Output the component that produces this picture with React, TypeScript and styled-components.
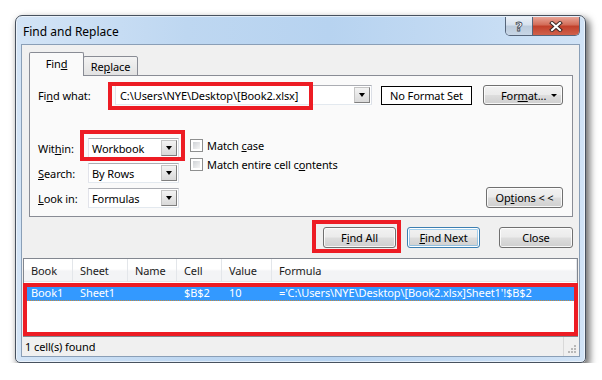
import React from "react";
import styled, { createGlobalStyle } from "styled-components";

const UI_FONT = `"Noto Sans", "Open Sans", "Liberation Sans", Arial, sans-serif`;

const GlobalStyle = createGlobalStyle`
  html, body { margin: 0; padding: 0; background: #ffffff; }
  body { font-family: ${UI_FONT}; font-size: 11px; letter-spacing: -0.1px; color: #000; }
  * { box-sizing: border-box; }
`;

const Page = styled.div`
  padding: 15px 0 0 15px;
`;

const Window = styled.div`
  width: 571px;
  height: 348px;
  display: flex;
  flex-direction: column;
  border: 1px solid #47515e;
  border-radius: 7px 7px 5px 5px;
  background: linear-gradient(to right, #d3e4f6 0%, #bed7f1 30%, #b7d3f0 55%, #c4dbf3 80%, #d1e3f6 100%);
  box-shadow: inset 0 0 0 1px rgba(255, 255, 255, 0.55), 3px 4px 7px 1px rgba(0, 0, 0, 0.55);
`;

const TitleBar = styled.div`
  height: 28px;
  display: flex;
  align-items: flex-start;
  padding: 0 5px 0 7px;
`;

const Title = styled.div`
  font-size: 12px;
  letter-spacing: 0;
  line-height: 31px;
  color: #000;
`;

const CaptionGroup = styled.div`
  margin-left: auto;
  margin-top: 1px;
  height: 19px;
  display: flex;
  border: 1px solid #56657a;
  border-top: none;
  border-radius: 0 0 5px 5px;
  overflow: hidden;
`;

const CaptionButton = styled.div<{ $variant: "help" | "close" }>`
  width: ${(p) => (p.$variant === "help" ? 27 : 46)}px;
  display: flex;
  align-items: center;
  justify-content: center;
  border-right: ${(p) => (p.$variant === "help" ? "1px solid #56657a" : "none")};
  background: ${(p) =>
    p.$variant === "help"
      ? "linear-gradient(#eaf0f7 0%, #d6e1ee 45%, #bccbdc 50%, #c8d6e6 100%)"
      : "linear-gradient(#e8a496 0%, #d26a56 45%, #c13f2a 50%, #d0614b 100%)"};
`;

const HelpGlyph = styled.span`
  font-family: "DejaVu Sans", sans-serif;
  font-weight: bold;
  font-size: 13px;
  line-height: 1;
  color: #ffffff;
  -webkit-text-stroke: 0.8px #3b4552;
`;

const Client = styled.div`
  flex: 1;
  margin: 0 5px 5px;
  border: 1px solid #8a9fb7;
  background: #f0f0f0;
  display: flex;
  flex-direction: column;
`;

const TabArea = styled.div`
  padding: 7px 6px 0 7px;
`;

const TabStrip = styled.div`
  height: 24px;
  margin-bottom: -1px;
  display: flex;
  align-items: flex-end;
  position: relative;
  z-index: 1;
`;

const Tab = styled.div<{ $active?: boolean }>`
  width: 55px;
  height: ${(p) => (p.$active ? 24 : 20)}px;
  margin-left: ${(p) => (p.$active ? 0 : -1)}px;
  display: flex;
  align-items: center;
  justify-content: center;
  padding-bottom: ${(p) => (p.$active ? 2 : 0)}px;
  border: 1px solid #898c95;
  border-bottom: ${(p) => (p.$active ? "none" : "1px solid #898c95")};
  border-radius: 2px 2px 0 0;
  background: ${(p) => (p.$active ? "#fafafa" : "linear-gradient(#f3f3f3, #e2e2e2)")};
`;

const Panel = styled.div`
  height: 142px;
  border: 1px solid #898c95;
  background: #fafafa;
  padding: 9px 9px 8px 8px;
  display: flex;
  flex-direction: column;
`;

const FindRow = styled.div`
  height: 20px;
  display: flex;
  align-items: center;
`;

const Label = styled.span<{ $w: number }>`
  width: ${(p) => p.$w}px;
  white-space: nowrap;
`;

const U = styled.span`
  text-decoration: underline;
`;

const Combo = styled.div<{ $w: number }>`
  position: relative;
  width: ${(p) => p.$w}px;
  height: 20px;
  display: flex;
  align-items: stretch;
  background: #ffffff;
  border: 1px solid #abadb3;
  border-color: #abadb3 #dbdfe6 #e3e9ef #e2e3ea;
`;

const ComboText = styled.span<{ $pad: number }>`
  flex: 1;
  padding-left: ${(p) => p.$pad}px;
  display: flex;
  align-items: center;
  white-space: nowrap;
  overflow: hidden;
`;

const DropButton = styled.span`
  width: 16px;
  margin: 1px;
  display: flex;
  align-items: center;
  justify-content: center;
  border: 1px solid #a9a9a9;
  border-color: #c4c4c4 #7f7f7f #7f7f7f #c4c4c4;
  background: linear-gradient(#f3f3f3, #d9d9d9);
`;

const Arrow = styled.span`
  width: 0;
  height: 0;
  border-left: 3.5px solid transparent;
  border-right: 3.5px solid transparent;
  border-top: 4px solid #000;
`;

const NoFormat = styled.div`
  margin-left: 9px;
  width: 91px;
  height: 19px;
  border: 1px solid #000;
  background: #ffffff;
  display: flex;
  align-items: center;
  justify-content: center;
  white-space: nowrap;
`;

const Button = styled.div<{ $w: number; $default?: boolean; $ml?: number; $h?: number }>`
  position: relative;
  width: ${(p) => p.$w}px;
  height: ${(p) => p.$h ?? 21}px;
  margin-left: ${(p) => p.$ml ?? 0}px;
  display: flex;
  align-items: center;
  justify-content: center;
  white-space: nowrap;
  border: 1px solid ${(p) => (p.$default ? "#3c7fb1" : "#707070")};
  border-radius: 3px;
  background: linear-gradient(#f2f2f2 0%, #ebebeb 48%, #dddddd 52%, #cfcfcf 100%);
  box-shadow: ${(p) =>
    p.$default
      ? "inset 0 0 0 1px #ffffff, inset 0 0 0 2px rgba(72, 168, 234, 0.45)"
      : "inset 0 0 0 1px rgba(255, 255, 255, 0.8)"};
`;

const FormatLabel = styled.span`
  margin-left: 17px;
`;

const SmallArrow = styled.span`
  margin-left: auto;
  margin-right: 5px;
  width: 0;
  height: 0;
  border-left: 3px solid transparent;
  border-right: 3px solid transparent;
  border-top: 3px solid #000;
`;

const OptionsArea = styled.div`
  margin-top: 33px;
  display: flex;
  align-items: flex-start;
  flex: 1;
`;

const FieldGrid = styled.div`
  display: grid;
  grid-template-columns: 50px 91px;
  grid-auto-rows: 20px;
  row-gap: 5px;
  align-items: center;
`;

const CheckColumn = styled.div`
  margin-left: 11px;
  margin-top: 1px;
  display: flex;
  flex-direction: column;
  gap: 6px;
`;

const CheckRow = styled.label`
  height: 13px;
  display: flex;
  align-items: center;
  gap: 4px;
  white-space: nowrap;
`;

const CheckBox = styled.span`
  width: 13px;
  height: 13px;
  flex: none;
  border: 1px solid #8e8f8f;
  padding: 2px;
  background: linear-gradient(135deg, #cfd2d6, #f6f6f6) content-box, #ffffff;
`;

const OptionsButton = styled(Button)`
  margin-left: auto;
  align-self: flex-end;
`;

const ButtonRow = styled.div`
  display: flex;
  justify-content: flex-end;
  padding: 10px 6px 0 0;
`;

const Results = styled.div`
  position: relative;
  flex: 1;
  margin: 10px 1px 0;
  border: 1px solid #828790;
  background: #ffffff;
  display: flex;
  flex-direction: column;
`;

const GridRow = styled.div<{ $header?: boolean; $selected?: boolean }>`
  display: grid;
  grid-template-columns: 49px 55px 49px 45px 50px 1fr;
  height: ${(p) => (p.$header ? 23 : 16)}px;
  margin-top: ${(p) => (p.$header ? 0 : 3)}px;
  color: ${(p) => (p.$selected ? "#ffffff" : "#1b1b1b")};
  background: ${(p) =>
    p.$header
      ? "linear-gradient(#ffffff 0%, #ffffff 45%, #f3f4f6 55%, #f3f4f6 100%)"
      : p.$selected
      ? "#3399ff"
      : "transparent"};
  border-bottom: ${(p) =>
    p.$header ? "1px solid #e3e6ea" : p.$selected ? "1px dotted #c98a3a" : "none"};
`;

const Cell = styled.div<{ $header?: boolean }>`
  display: flex;
  align-items: center;
  padding-left: 7px;
  white-space: nowrap;
  border-right: ${(p) => (p.$header ? "1px solid #e3e6ea" : "none")};
`;

const StatusBar = styled.div`
  height: 19px;
  display: flex;
  align-items: center;
  padding-left: 3px;
`;

const GripCell = styled.div`
  margin-left: auto;
  align-self: stretch;
  width: 16px;
  border-left: 1px solid #d9d9d9;
  display: flex;
  align-items: flex-end;
  justify-content: flex-end;
  padding: 0 2px 2px 0;
`;

const Mark = styled.div<{ $top: number; $left: number; $w: number; $h: number }>`
  position: absolute;
  top: ${(p) => p.$top}px;
  left: ${(p) => p.$left}px;
  width: ${(p) => p.$w}px;
  height: ${(p) => p.$h}px;
  border: 4px solid #ed1c24;
  pointer-events: none;
  z-index: 5;
`;

const CloseGlyph = () => (
  <svg width="14" height="11" viewBox="0 0 14 11">
    <path d="M3 2 L11 9 M11 2 L3 9" stroke="#3d2a26" strokeWidth="4" strokeLinecap="square" fill="none" />
    <path d="M3 2 L11 9 M11 2 L3 9" stroke="#ffffff" strokeWidth="2" strokeLinecap="square" fill="none" />
  </svg>
);

const Grip = () => (
  <svg width="10" height="10" viewBox="0 0 10 10">
    {[
      [7, 1],
      [7, 4],
      [4, 4],
      [7, 7],
      [4, 7],
      [1, 7],
    ].map(([x, y]) => (
      <rect key={`${x}-${y}`} x={x} y={y} width="2" height="2" fill="#b8b8b8" />
    ))}
  </svg>
);

const columns = ["Book", "Sheet", "Name", "Cell", "Value", "Formula"];
const found = ["Book1", "Sheet1", "", "$B$2", "10", "='C:\\Users\\NYE\\Desktop\\[Book2.xlsx]Sheet1'!$B$2"];

const SelectField = ({ value, children }: { value: string; children?: React.ReactNode }) => (
  <Combo $w={91}>
    <ComboText $pad={3}>{value}</ComboText>
    <DropButton>
      <Arrow />
    </DropButton>
    {children}
  </Combo>
);

export default function App() {
  return (
    <>
      <GlobalStyle />
      <Page>
        <Window>
          <TitleBar>
            <Title>Find and Replace</Title>
            <CaptionGroup>
              <CaptionButton $variant="help">
                <HelpGlyph>?</HelpGlyph>
              </CaptionButton>
              <CaptionButton $variant="close">
                <CloseGlyph />
              </CaptionButton>
            </CaptionGroup>
          </TitleBar>

          <Client>
            <TabArea>
              <TabStrip>
                <Tab $active>
                  <span>
                    Fin<U>d</U>
                  </span>
                </Tab>
                <Tab>
                  <span>
                    Re<U>p</U>lace
                  </span>
                </Tab>
              </TabStrip>

              <Panel>
                <FindRow>
                  <Label $w={77}>
                    Fi<U>n</U>d what:
                  </Label>
                  <Combo $w={257}>
                    <ComboText $pad={4}>C:\Users\NYE\Desktop\[Book2.xlsx]</ComboText>
                    <DropButton>
                      <Arrow />
                    </DropButton>
                    <Mark $top={-4} $left={-8} $w={205} $h={28} />
                  </Combo>
                  <NoFormat>No Format Set</NoFormat>
                  <Button $w={80} $h={20} $ml={11}>
                    <FormatLabel>
                      For<U>m</U>at...
                    </FormatLabel>
                    <SmallArrow />
                  </Button>
                </FindRow>

                <OptionsArea>
                  <FieldGrid>
                    <Label $w={50}>
                      Wit<U>h</U>in:
                    </Label>
                    <SelectField value="Workbook">
                      <Mark $top={-9} $left={-9} $w={105} $h={31} />
                    </SelectField>
                    <Label $w={50}>
                      <U>S</U>earch:
                    </Label>
                    <SelectField value="By Rows" />
                    <Label $w={50}>
                      <U>L</U>ook in:
                    </Label>
                    <SelectField value="Formulas" />
                  </FieldGrid>

                  <CheckColumn>
                    <CheckRow>
                      <CheckBox />
                      <span>
                        Match <U>c</U>ase
                      </span>
                    </CheckRow>
                    <CheckRow>
                      <CheckBox />
                      <span>
                        Match entire cell c<U>o</U>ntents
                      </span>
                    </CheckRow>
                  </CheckColumn>

                  <OptionsButton $w={77}>
                    <span>
                      Op<U>t</U>ions &lt; &lt;
                    </span>
                  </OptionsButton>
                </OptionsArea>
              </Panel>
            </TabArea>

            <ButtonRow>
              <Button $w={73}>
                <span>
                  F<U>i</U>nd All
                </span>
                <Mark $top={-8} $left={-12} $w={89} $h={33} />
              </Button>
              <Button $w={73} $ml={11} $default>
                <span>
                  <U>F</U>ind Next
                </span>
              </Button>
              <Button $w={74} $ml={19}>
                Close
              </Button>
            </ButtonRow>

            <Results>
              <GridRow $header>
                {columns.map((c) => (
                  <Cell key={c} $header>
                    {c}
                  </Cell>
                ))}
              </GridRow>
              <GridRow $selected>
                {found.map((v, i) => (
                  <Cell key={i}>{v}</Cell>
                ))}
              </GridRow>
              <Mark $top={24} $left={-1} $w={555} $h={53} />
            </Results>

            <StatusBar>
              <span>1 cell(s) found</span>
              <GripCell>
                <Grip />
              </GripCell>
            </StatusBar>
          </Client>
        </Window>
      </Page>
    </>
  );
}
